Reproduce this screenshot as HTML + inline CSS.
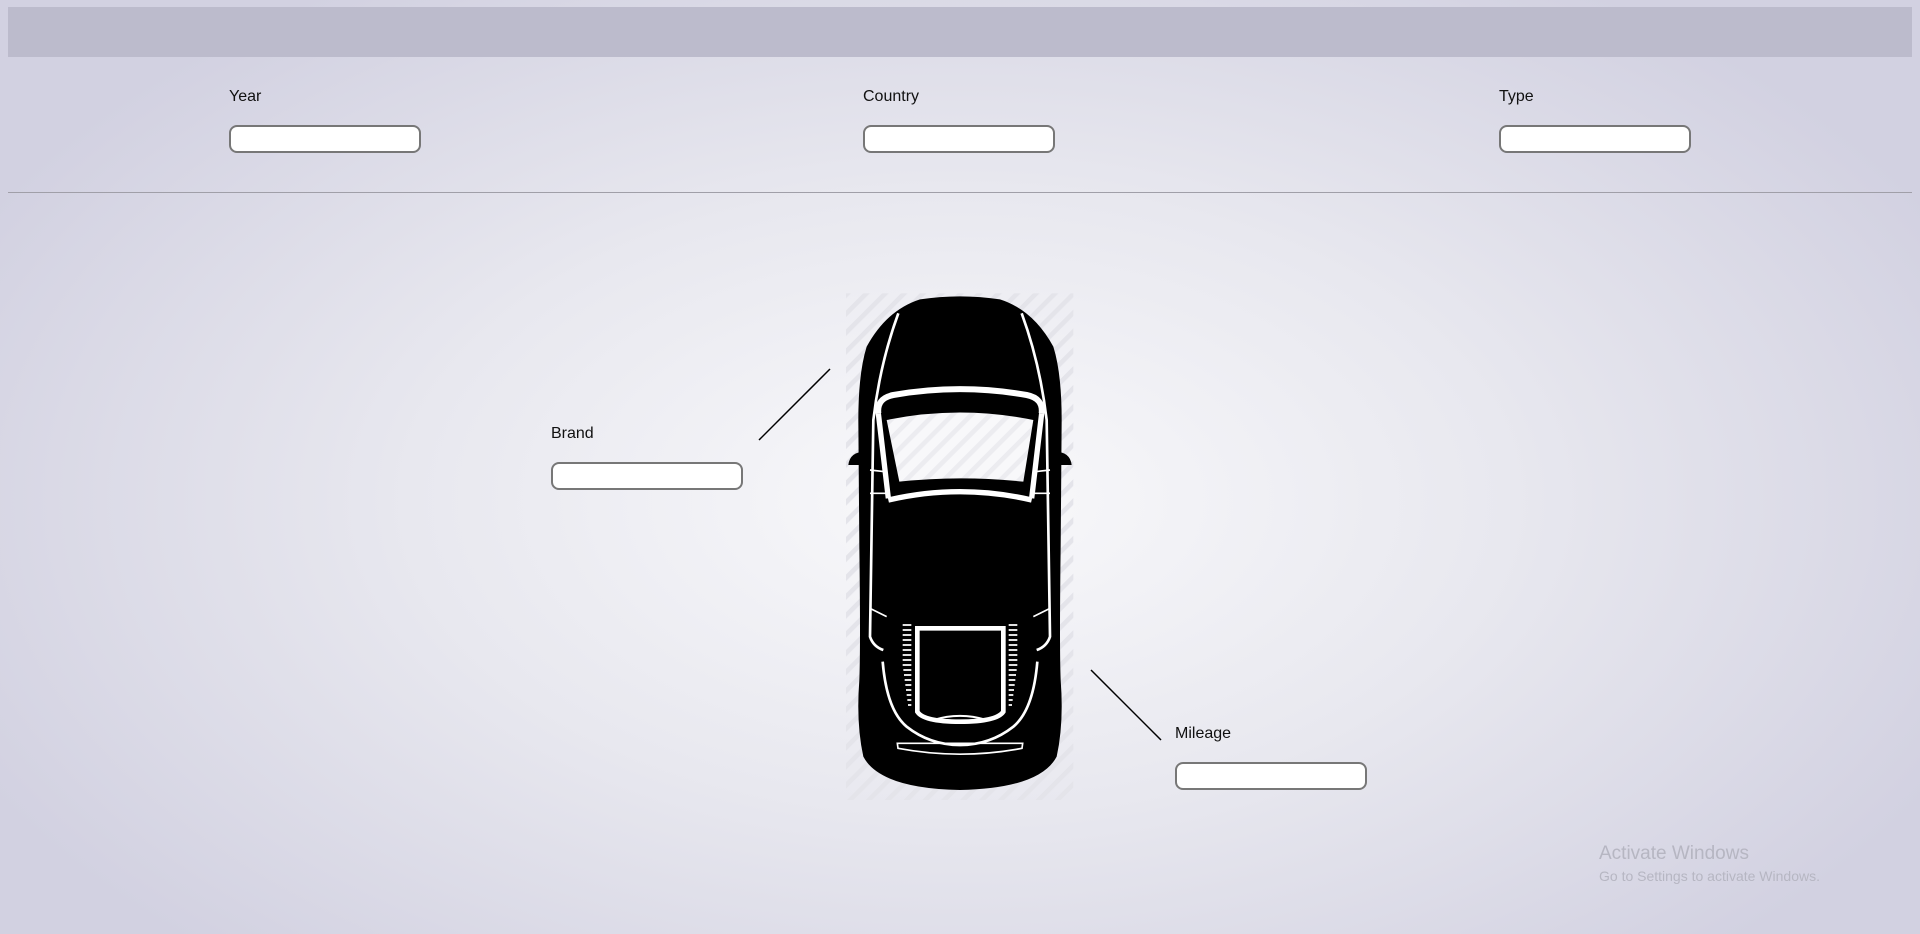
<!DOCTYPE html>
<html><head><meta charset="utf-8"><style>
html,body{margin:0;width:1920px;height:934px;overflow:hidden}
body{background:radial-gradient(ellipse 1100px 620px at 960px 500px,#f9f9fb 0%,#e8e8ef 50%,#d2d1e1 100%);font-family:"Liberation Sans",sans-serif;font-size:16px;color:#111;position:relative}
.bar{position:absolute;left:8px;top:7px;width:1904px;height:50px;background:#bcbbcc}
.hr{position:absolute;left:8px;top:192px;width:1904px;height:1px;background:#a09fa8}
.lbl{position:absolute}
.inp{position:absolute;width:188px;height:24px;border:2px solid #777;border-radius:8px;background:#fff}
.wm{position:absolute;left:1599px;top:843px;color:#b6b6c2}
</style></head><body>
<div class="bar"></div>
<div class="lbl" style="left:229px;top:88px">Year</div><div class="inp" style="left:229px;top:125px"></div>
<div class="lbl" style="left:863px;top:88px">Country</div><div class="inp" style="left:863px;top:125px"></div>
<div class="lbl" style="left:1499px;top:88px">Type</div><div class="inp" style="left:1499px;top:125px"></div>
<div class="hr"></div>
<div class="lbl" style="left:551px;top:425px">Brand</div><div class="inp" style="left:551px;top:462px"></div>
<div class="lbl" style="left:1175px;top:725px">Mileage</div><div class="inp" style="left:1175px;top:762px"></div>
<svg style="position:absolute;left:0;top:0" width="1920" height="934">
<line x1="759" y1="440" x2="830" y2="369" stroke="#000" stroke-width="1.5"/>
<line x1="1091" y1="670" x2="1161" y2="740" stroke="#000" stroke-width="1.5"/>
</svg>
<svg style="position:absolute;left:820px;top:280px" width="280" height="530" viewBox="0 0 840 1590">
<defs><pattern id="h" width="40" height="40" patternUnits="userSpaceOnUse" patternTransform="rotate(45)"><rect width="14" height="40" fill="#e4e4ea"/></pattern>
<pattern id="w" width="40" height="40" patternUnits="userSpaceOnUse" patternTransform="rotate(45)"><rect width="40" height="40" fill="#f8f8fa"/><rect width="14" height="40" fill="#ececf0"/></pattern></defs>
<rect x="78" y="40" width="682" height="1520" fill="url(#h)"/>
<path d="M300 58 Q420 40 540 58 Q640 90 700 200 Q725 280 725 420 L722 800 Q718 1100 722 1200 Q732 1330 710 1430 Q660 1525 420 1530 Q180 1525 130 1430 Q108 1330 118 1200 Q122 1100 118 800 L115 420 Q115 280 140 200 Q200 90 300 58Z" fill="#000"/>
<path d="M150 515 Q90 510 85 555 L150 555Z M690 515 Q750 510 755 555 L690 555Z" fill="#000"/>
<g fill="none" stroke="#fff">
<path d="M235 100 Q180 250 160 420 L150 1070 Q160 1100 190 1110" stroke-width="8"/>
<path d="M605 100 Q660 250 680 420 L690 1070 Q680 1100 650 1110" stroke-width="8"/>
<path d="M175 400 Q170 355 220 345 Q420 310 620 345 Q670 355 665 400" stroke-width="18"/>
<path d="M175 400 L205 655 M665 400 L635 655" stroke-width="16"/>
<path d="M205 660 Q420 610 635 660" stroke-width="16"/>
<path d="M188 1145 Q200 1290 260 1340 Q330 1395 420 1395 Q510 1395 580 1340 Q640 1290 652 1145" stroke-width="8"/>
<path d="M292 1045 L550 1045 L550 1295 Q530 1325 420 1325 Q310 1325 292 1295Z" stroke-width="14"/>
<path d="M340 1320 Q420 1295 500 1320" stroke-width="6"/>
<path d="M232 1390 L608 1390 L606 1405 Q420 1440 234 1405Z" stroke-width="5"/>
<path d="M150 985 L200 1010 M690 985 L640 1010 M150 570 L195 575 M690 570 L645 575 M150 640 L200 640 M690 640 L640 640" stroke-width="5"/>
</g>
<path d="M200 420 Q420 375 640 420 L610 605 Q420 585 238 605Z" fill="url(#w)"/>
<g stroke="#fff" stroke-width="5">
<path d="M248 1035h26M248 1050h26M248 1065h26M248 1080h26M248 1095h26M248 1110h26M248 1125h26M248 1140h26M248 1155h26M250 1170h24M252 1185h22M254 1200h20M256 1215h18M258 1230h16M260 1245h14M262 1260h12M264 1275h10"/>
<path d="M566 1035h26M566 1050h26M566 1065h26M566 1080h26M566 1095h26M566 1110h26M566 1125h26M566 1140h26M566 1155h26M566 1170h24M566 1185h22M566 1200h20M566 1215h18M566 1230h16M566 1245h14M566 1260h12M566 1275h10"/>
</g>
</svg>
<div class="wm"><div style="font-size:19px">Activate Windows</div><div style="font-size:14px;margin-top:3px">Go to Settings to activate Windows.</div></div>
</body></html>
